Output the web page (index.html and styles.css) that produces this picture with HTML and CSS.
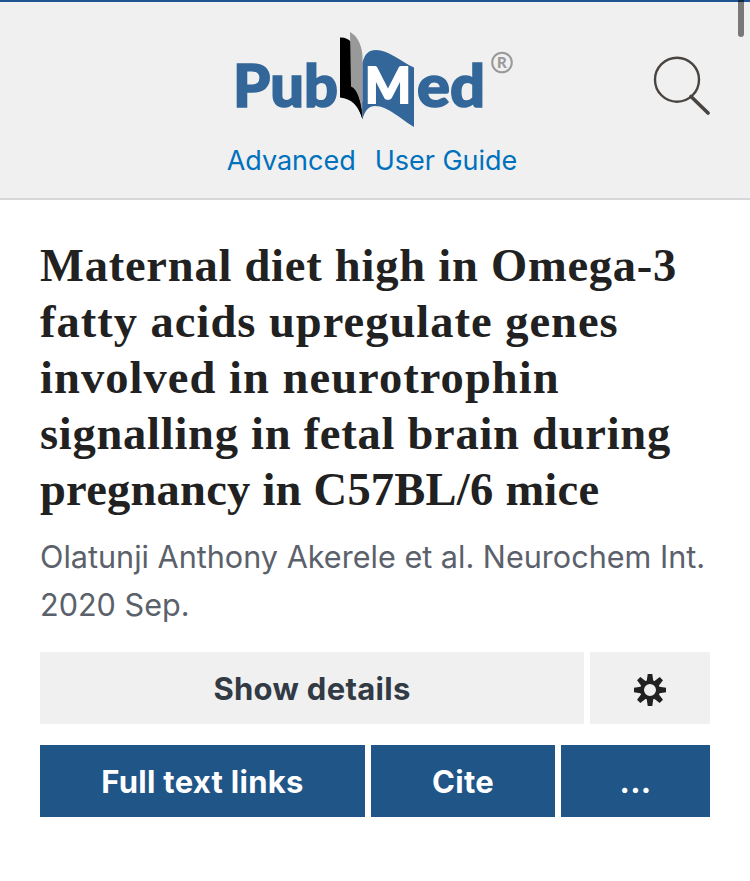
FILE: index.html
```html
<!DOCTYPE html>
<html lang="en">
<head>
<meta charset="UTF-8">
<meta name="viewport" content="width=device-width, initial-scale=1.0">
<title>PubMed</title>
<link rel="stylesheet" href="styles.css">
</head>
<body>
<header class="header">
    <div class="brand">
        <svg class="logo" width="290" height="104" viewBox="0 0 290 104" role="img" aria-label="PubMed">
            <text class="logo-text" x="3" y="78.5" textLength="105" lengthAdjust="spacingAndGlyphs">Pub</text>
            <path fill="#000" d="M110 9.5Q117 9 121 14V58.5Q130 62 132.5 75V91.5Q127 71 110 69.5Z"/>
            <path fill="#999" d="M120 4Q131 10 132.5 28V91Q131 66 121 58.5Z"/>
            <path fill="#000" d="M121 58.5Q130 62 132.5 91Q128 76 119 71Z"/>
            <path fill="#336699" d="M132.5 35Q135 22 146 22C158 22 170 33 184 39.5V99C172 92 158 78 145 78Q136 78 132.5 91Z"/>
            <text class="logo-m" x="135" y="74.5" textLength="46" lengthAdjust="spacingAndGlyphs">M</text>
            <text class="logo-text" x="187" y="78.5" textLength="68" lengthAdjust="spacingAndGlyphs">ed</text>
            <circle cx="272" cy="34.5" r="9.8" fill="none" stroke="#999" stroke-width="2"/>
            <text class="logo-r" x="267" y="40">R</text>
        </svg>
        <nav class="links">
            <a href="#">Advanced</a>
            <a href="#">User Guide</a>
        </nav>
    </div>
    <button class="search" aria-label="Search">
        <svg width="60" height="62" viewBox="0 0 60 62" fill="none" stroke="#494440">
            <circle cx="27" cy="25.7" r="22" stroke-width="2.4"/>
            <path d="M41 42.5L58 59" stroke-width="3.6" stroke-linecap="round"/>
        </svg>
    </button>
</header>
<div class="scrollbar"></div>
<main class="article">
    <h1 class="title">
        <span class="line l1">Maternal diet high in Omega-3</span>
        <span class="line l2">fatty acids upregulate genes</span>
        <span class="line l3">involved in neurotrophin</span>
        <span class="line l4">signalling in fetal brain during</span>
        <span class="line l5">pregnancy in C57BL/6 mice</span>
    </h1>
    <p class="citation">Olatunji Anthony Akerele et al. Neurochem Int. <br>2020 Sep.</p>
    <div class="row">
        <button class="btn details">Show details</button>
        <button class="btn settings" aria-label="Settings">
            <svg class="gear" width="34" height="34" viewBox="-17 -17 34 34" fill="#212121">
                <defs><path id="tooth" d="M-3.4 -8L-2.3 -16H2.3L3.4 -8Z"/></defs>
                <circle r="8" fill="none" stroke="#212121" stroke-width="4"/>
                <use href="#tooth"/>
                <use href="#tooth" transform="rotate(45)"/>
                <use href="#tooth" transform="rotate(90)"/>
                <use href="#tooth" transform="rotate(135)"/>
                <use href="#tooth" transform="rotate(180)"/>
                <use href="#tooth" transform="rotate(225)"/>
                <use href="#tooth" transform="rotate(270)"/>
                <use href="#tooth" transform="rotate(315)"/>
            </svg>
        </button>
    </div>
    <div class="row actions">
        <button class="btn blue full">Full text links</button>
        <button class="btn blue cite">Cite</button>
        <button class="btn blue more">...</button>
    </div>
</main>
</body>
</html>
```
FILE: styles.css
```css
* {
    box-sizing: border-box;
}

body {
    margin: 0;
    background-color: #fff;
    font-family: Inter, "Liberation Sans", sans-serif;
    overflow: hidden;
}

.header {
    display: grid;
    grid-template-columns: 100px 1fr 100px;
    height: 200px;
    border-top: 2px solid #205493;
    border-bottom: 2px solid #d6d7d9;
    background-color: #f0f0f0;
}

.brand {
    grid-column: 2;
    display: flex;
    flex-direction: column;
    align-items: center;
    padding-top: 26px;
}

.logo {
    display: block;
}

.logo-text,
.logo-m,
.logo-r {
    font-family: Lato, sans-serif;
    font-weight: 900;
}

.logo-text {
    font-size: 58.5px;
    fill: #336699;
    stroke: #336699;
    stroke-width: 1.6px;
}

.logo-m {
    font-size: 50px;
    fill: #fff;
    stroke: #fff;
    stroke-width: 1.8px;
}

.logo-r {
    font-size: 15px;
    fill: #999;
}

.links {
    display: flex;
    gap: 19px;
    padding-top: 12px;
    margin-right: 6px;
    line-height: 34px;
}

.links a {
    font-size: 27px;
    letter-spacing: -0.02px;
    color: #0071bc;
    text-decoration: none;
}

.search {
    justify-self: start;
    align-self: start;
    margin-top: 52px;
    padding: 0;
    border: 0;
    background: none;
}

.search svg {
    display: block;
}

/* scroll thumb over the header */
.scrollbar {
    position: absolute;
    top: -8px;
    right: 6px;
    width: 6px;
    height: 45px;
    border-radius: 3px;
    background-color: rgba(0, 0, 0, 0.5);
}

.article {
    padding: 38px 40px 0;
}

.title {
    margin: 0;
    font-family: "Liberation Serif", serif;
    font-size: 46.5px;
    font-weight: 700;
    line-height: 56px;
    color: #212121;
}

.line {
    display: block;
    white-space: nowrap;
}

.l1 {
    letter-spacing: 0.77px;
}

.l2 {
    letter-spacing: 1px;
}

.l3 {
    letter-spacing: 1.05px;
}

.l4 {
    letter-spacing: 0.74px;
}

.l5 {
    letter-spacing: 0.24px;
}

.citation {
    margin: 15px 0 0;
    font-size: 30.6px;
    line-height: 48px;
    color: #5b616b;
    white-space: nowrap;
}

.row {
    display: flex;
    gap: 6px;
    margin-top: 23px;
}

.actions {
    margin-top: 21px;
}

.btn {
    display: flex;
    align-items: center;
    justify-content: center;
    height: 72px;
    padding: 0;
    border: 0;
    background-color: #f0f0f0;
    font-family: inherit;
    font-size: 31px;
    font-weight: 700;
    letter-spacing: 0.3px;
    color: #323a45;
}

.details {
    width: 544px;
}

.settings {
    width: 120px;
}

.gear {
    margin-top: 4px;
}

.blue {
    background-color: #205587;
    color: #fff;
}

.full {
    width: 325px;
}

.cite {
    width: 184px;
}

.more {
    width: 149px;
}
```
